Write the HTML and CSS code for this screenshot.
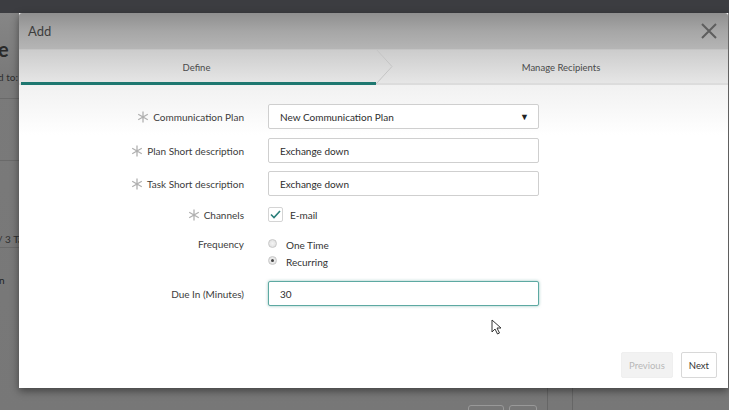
FILE: index.html
```html
<!DOCTYPE html>
<html>
<head>
<meta charset="utf-8">
<link rel="stylesheet" href="styles.css">
</head>
<body>
<div class="topbar"></div>
<div class="page">
  <div class="bg-title">e</div>
  <div class="bg-sub">d to:</div>
  <div class="bg-line l1"></div>
  <div class="bg-line l2"></div>
  <div class="bg-row">/ 3 Ta</div>
  <div class="bg-line l3"></div>
  <div class="bg-row2">n</div>
</div>
<div class="bg-bottom">
  <span class="bg-btn b1"></span><span class="bg-btn b2"></span>
  <span class="bg-vl v1"></span><span class="bg-vl v2"></span>
</div>

<div class="modal">
  <div class="modal-header">
    <span class="modal-title">Add</span>
    <svg class="close" width="16" height="16" viewBox="0 0 16 16"><path d="M1 1L15 15M15 1L1 15" stroke="#5e5e5e" stroke-width="2" fill="none"/></svg>
  </div>
  <div class="tabs">
    <div class="tab active">Define</div>
    <svg class="chev" width="18" height="35" viewBox="0 0 18 35"><path d="M0 0L16 17.5L0 35" stroke="#c4c4c4" stroke-width="1" fill="none"/></svg>
    <div class="tab">Manage Recipients</div>
  </div>
  <div class="modal-body">
    <div class="form">
      <div class="label r1"><svg class="ast" viewBox="0 0 12 12"><path d="M6 0.5V11.5M1.2 3.2L10.8 8.8M10.8 3.2L1.2 8.8" stroke="#b0b0b0" stroke-width="1.3"/></svg>Communication Plan</div>
      <div class="field r1"><div class="input select">New Communication Plan<span class="arrow">▼</span></div></div>

      <div class="label r2"><svg class="ast" viewBox="0 0 12 12"><path d="M6 0.5V11.5M1.2 3.2L10.8 8.8M10.8 3.2L1.2 8.8" stroke="#b0b0b0" stroke-width="1.3"/></svg>Plan Short description</div>
      <div class="field r2"><div class="input">Exchange down</div></div>

      <div class="label r3"><svg class="ast" viewBox="0 0 12 12"><path d="M6 0.5V11.5M1.2 3.2L10.8 8.8M10.8 3.2L1.2 8.8" stroke="#b0b0b0" stroke-width="1.3"/></svg>Task Short description</div>
      <div class="field r3"><div class="input">Exchange down</div></div>

      <div class="label r4"><svg class="ast" viewBox="0 0 12 12"><path d="M6 0.5V11.5M1.2 3.2L10.8 8.8M10.8 3.2L1.2 8.8" stroke="#b0b0b0" stroke-width="1.3"/></svg>Channels</div>
      <div class="field r4 check-row">
        <span class="checkbox"><svg width="11" height="9" viewBox="0 0 11 9"><path d="M1 4.5L4 7.5L10 1" stroke="#2a7f7a" stroke-width="1.6" fill="none"/></svg></span>
        <span class="opt">E-mail</span>
      </div>

      <div class="label r5">Frequency</div>
      <div class="field r5 radios">
        <div class="radio-row"><span class="radio"></span><span class="opt">One Time</span></div>
        <div class="radio-row"><span class="radio on"></span><span class="opt">Recurring</span></div>
      </div>

      <div class="label r6">Due In (Minutes)</div>
      <div class="field r6"><div class="input focus">30</div></div>
    </div>
    <div class="footer">
      <button class="btn disabled">Previous</button>
      <button class="btn">Next</button>
    </div>
  </div>
</div>
<svg class="cursor" width="12" height="16" viewBox="0 0 12 16"><path d="M1 1V13L4 10L6.5 15L8.5 14L6 9H10Z" fill="#fff" stroke="#333" stroke-width="1"/></svg>
</body>
</html>
```
FILE: styles.css
```css
html, body {
  margin: 0;
  padding: 0;
}
body {
  width: 729px;
  height: 410px;
  overflow: hidden;
  background: #787878;
  font-family: Lato, "Open Sans", sans-serif;
  position: relative;
}
.topbar {
  height: 13px;
  background: #3c3d41;
}
.page {
  position: relative;
  height: 397px;
  background: linear-gradient(#868686, #7a7a7a 60px, #777);
  color: #2e2e2e;
}
.bg-title {
  position: absolute;
  left: -2px;
  top: 24px;
  font-size: 20px;
  font-weight: bold;
  color: #2a2a2a;
}
.bg-sub {
  position: absolute;
  left: -2px;
  top: 58px;
  font-size: 10px;
  color: #2e2e2e;
}
.bg-line {
  position: absolute;
  left: 0;
  width: 20px;
  height: 1px;
  background: #6a6a6a;
}
.l1 { top: 85px; }
.l2 { top: 147px; }
.l3 { top: 234px; }
.bg-row {
  position: absolute;
  left: -2px;
  top: 220px;
  font-size: 10px;
  color: #2e2e2e;
}
.bg-row2 {
  position: absolute;
  left: -1px;
  top: 261px;
  font-size: 10px;
  color: #222;
}
.bg-bottom .bg-vl {
  position: absolute;
  top: 388px;
  width: 1px;
  height: 22px;
  background: #666;
}
.v1 { left: 547px; }
.v2 { left: 572px; }
.bg-btn {
  position: absolute;
  top: 405px;
  height: 10px;
  border: 1px solid #999;
  border-radius: 3px;
}
.b1 { left: 468px; width: 34px; }
.b2 { left: 509px; width: 26px; }

.modal {
  position: absolute;
  left: 19px;
  top: 13px;
  width: 709px;
  height: 375px;
  background: #fff;
  box-shadow: 0 3px 8px rgba(0,0,0,0.45);
  display: flex;
  flex-direction: column;
}
.modal-header {
  height: 36px;
  display: flex;
  align-items: center;
  justify-content: space-between;
  padding: 0 11px 0 9px;
  background: linear-gradient(#8f8f8f, #a6a6a6 50%, #b5b5b5);
  border-bottom: 1px solid #c4c4c4;
  border-radius: 3px 3px 0 0;
}
.modal-title {
  font-size: 13px;
  color: #3d3d3d;
}
.tabs {
  height: 33px;
  display: flex;
  align-items: stretch;
  background: linear-gradient(#cccccc, #e6e6e6);
  border-bottom: 2px solid #dcdcdc;
  position: relative;
}
.tab {
  flex: 1;
  display: flex;
  align-items: center;
  justify-content: center;
  font-size: 9.5px;
  color: #4a4a4a;
  padding-top: 2px;
}
.tab.active {
  box-sizing: border-box;
  flex: 0 0 355px;
  margin-left: 2px;
  border-bottom: 3px solid #1e7770;
  margin-bottom: -2px;
  padding-right: 4px;
}
.chev {
  flex: 0 0 18px;
  margin-top: -1px;
}
.modal-body {
  flex: 1;
  display: flex;
  flex-direction: column;
  background: linear-gradient(#f1f1f1, #ffffff 50px);
}
.form {
  display: grid;
  grid-template-columns: 225px 271px;
  column-gap: 24px;
  padding-top: 19px;
}
.label {
  display: flex;
  align-items: center;
  justify-content: flex-end;
  font-size: 10px;
  color: #3c3c3c;
  height: 25px;
}
.ast {
  width: 12px;
  height: 12px;
  margin-right: 4px;
}
.field {
  height: 25px;
}
.r2 { margin-top: 9px; }
.r3 { margin-top: 8px; }
.r4 { margin-top: 10px; height: 17px; }
.label.r4 { height: 17px; }
.r5 { margin-top: 16px; }
.label.r5 { height: 9px; }
.field.r5 { height: auto; margin-top: 15px; }
.r6 { margin-top: 16px; }
.input {
  box-sizing: border-box;
  height: 25px;
  border: 1px solid #cfcfcf;
  border-radius: 2px;
  background: #fff;
  font-size: 10px;
  color: #2d2d2d;
  display: flex;
  align-items: center;
  padding-left: 11px;
}
.select {
  justify-content: space-between;
  padding-right: 9px;
}
.arrow {
  font-size: 9px;
  color: #222;
}
.focus {
  border: 1px solid #5da9a2;
  box-shadow: 0 0 3px rgba(40,130,120,0.5);
}
.check-row {
  display: flex;
  align-items: center;
}
.checkbox {
  box-sizing: border-box;
  width: 15px;
  height: 15px;
  border: 1px solid #d4d4d4;
  border-radius: 2px;
  background: #fff;
  display: flex;
  align-items: center;
  justify-content: center;
  margin-right: 7px;
}
.opt {
  font-size: 10px;
  color: #333;
}
.radios {
  display: flex;
  flex-direction: column;
  gap: 7px;
}
.radio-row {
  display: flex;
  align-items: center;
  height: 10px;
}
.radio {
  box-sizing: border-box;
  width: 9px;
  height: 9px;
  border-radius: 50%;
  border: 1px solid #c8c8c8;
  background: radial-gradient(#f4f4f4, #dcdcdc);
  margin-right: 9px;
  display: flex;
  align-items: center;
  justify-content: center;
}
.radio.on::after {
  content: "";
  width: 3px;
  height: 3px;
  border-radius: 50%;
  background: #444;
}
.radio-row .opt { margin-top: 3px; }
.footer {
  margin-top: auto;
  display: flex;
  justify-content: flex-end;
  gap: 8px;
  padding: 0 11px 10px 0;
}
.btn {
  height: 26px;
  font-family: Lato, "Open Sans", sans-serif;
  font-size: 9.5px;
  padding: 0 7px;
  background: #fff;
  border: 1px solid #d8d8d8;
  border-radius: 2px;
  color: #333;
}
.btn.disabled {
  background: #f2f2f2;
  border-color: #efefef;
  color: #b8b8b8;
}
.close { display: block; }
.cursor {
  position: absolute;
  left: 491px;
  top: 319px;
}
```
